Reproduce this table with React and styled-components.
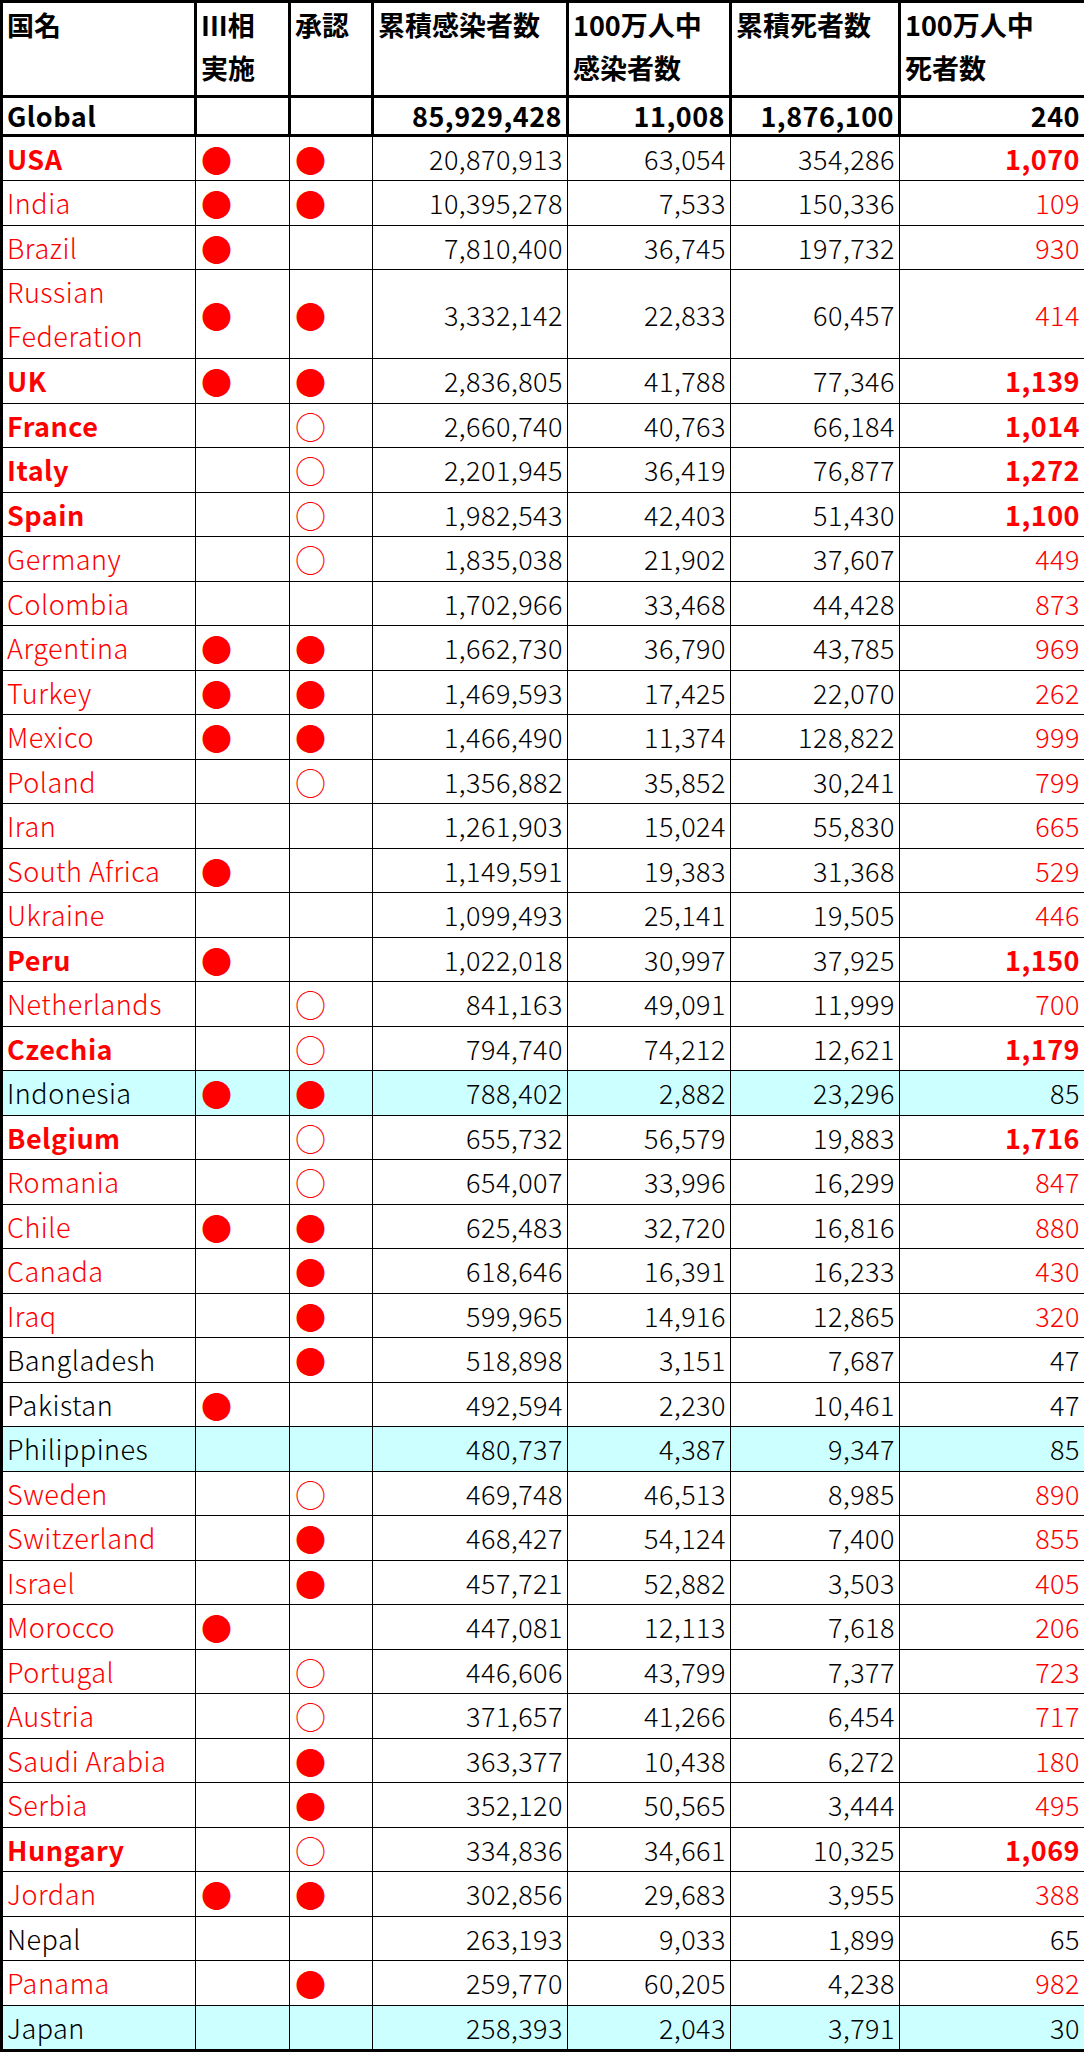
import React from 'react'
import styled, { createGlobalStyle } from 'styled-components'

const GlobalStyle = createGlobalStyle`
  html, body {
    margin: 0;
    padding: 0;
    background: #ffffff;
  }
  body {
    font-family: "Noto Sans CJK JP", "Noto Sans", sans-serif;
    color: #000000;
  }
`

const RED = '#ff0000'
const CYAN = '#ccffff'

const Sheet = styled.table`
  border-collapse: collapse;
  table-layout: fixed;
  width: 1084px;
  border: 3px solid #000;
  font-size: 27px;
  letter-spacing: 0.5px;
`

const HeadCell = styled.th`
  border: 3px solid #000;
  padding: 0 4px;
  height: 92px;
  line-height: 43px;
  text-align: left;
  vertical-align: top;
  font-weight: 700;
  letter-spacing: 0;
  white-space: pre-line;
`

const Cell = styled.td`
  border: ${(p) => (p.$strong ? '3px' : '1px')} solid #000;
  padding: 0 4px;
  height: ${(p) => (p.$strong ? '35.5px' : p.$tall ? '88px' : '43.5px')};
  line-height: ${(p) => (p.$strong ? '35px' : '43px')};
  text-align: ${(p) => (p.$num ? 'right' : 'left')};
  vertical-align: middle;
  color: ${(p) => p.$color || '#000'};
  font-weight: ${(p) => (p.$bold ? 700 : 300)};
  background: ${(p) => (p.$hl ? CYAN : 'transparent')};
  white-space: nowrap;
  overflow: hidden;
`

const NameText = styled.span`
  display: block;
  white-space: normal;
  line-height: 44px;
`

const Mark = styled.span`
  display: inline-block;
  vertical-align: top;
  color: ${RED};
  font-size: 31px;
  line-height: 43px;
  height: 43px;
  padding-left: 1px;
`

const headers = [
  { label: '国名', w: 194 },
  { label: 'III相\n実施', w: 94 },
  { label: '承認', w: 83 },
  { label: '累積感染者数', w: 195 },
  { label: '100万人中\n感染者数', w: 163 },
  { label: '累積死者数', w: 169 },
  { label: '100万人中\n死者数', w: 186 },
]

// name, phase3, approved (F = filled, O = hollow), cases, cases/M, deaths, deaths/M, highlight
const rows = [
  ['USA', 'F', 'F', '20,870,913', '63,054', '354,286', '1,070'],
  ['India', 'F', 'F', '10,395,278', '7,533', '150,336', '109'],
  ['Brazil', 'F', '', '7,810,400', '36,745', '197,732', '930'],
  ['Russian Federation', 'F', 'F', '3,332,142', '22,833', '60,457', '414'],
  ['UK', 'F', 'F', '2,836,805', '41,788', '77,346', '1,139'],
  ['France', '', 'O', '2,660,740', '40,763', '66,184', '1,014'],
  ['Italy', '', 'O', '2,201,945', '36,419', '76,877', '1,272'],
  ['Spain', '', 'O', '1,982,543', '42,403', '51,430', '1,100'],
  ['Germany', '', 'O', '1,835,038', '21,902', '37,607', '449'],
  ['Colombia', '', '', '1,702,966', '33,468', '44,428', '873'],
  ['Argentina', 'F', 'F', '1,662,730', '36,790', '43,785', '969'],
  ['Turkey', 'F', 'F', '1,469,593', '17,425', '22,070', '262'],
  ['Mexico', 'F', 'F', '1,466,490', '11,374', '128,822', '999'],
  ['Poland', '', 'O', '1,356,882', '35,852', '30,241', '799'],
  ['Iran', '', '', '1,261,903', '15,024', '55,830', '665'],
  ['South Africa', 'F', '', '1,149,591', '19,383', '31,368', '529'],
  ['Ukraine', '', '', '1,099,493', '25,141', '19,505', '446'],
  ['Peru', 'F', '', '1,022,018', '30,997', '37,925', '1,150'],
  ['Netherlands', '', 'O', '841,163', '49,091', '11,999', '700'],
  ['Czechia', '', 'O', '794,740', '74,212', '12,621', '1,179'],
  ['Indonesia', 'F', 'F', '788,402', '2,882', '23,296', '85', true],
  ['Belgium', '', 'O', '655,732', '56,579', '19,883', '1,716'],
  ['Romania', '', 'O', '654,007', '33,996', '16,299', '847'],
  ['Chile', 'F', 'F', '625,483', '32,720', '16,816', '880'],
  ['Canada', '', 'F', '618,646', '16,391', '16,233', '430'],
  ['Iraq', '', 'F', '599,965', '14,916', '12,865', '320'],
  ['Bangladesh', '', 'F', '518,898', '3,151', '7,687', '47'],
  ['Pakistan', 'F', '', '492,594', '2,230', '10,461', '47'],
  ['Philippines', '', '', '480,737', '4,387', '9,347', '85', true],
  ['Sweden', '', 'O', '469,748', '46,513', '8,985', '890'],
  ['Switzerland', '', 'F', '468,427', '54,124', '7,400', '855'],
  ['Israel', '', 'F', '457,721', '52,882', '3,503', '405'],
  ['Morocco', 'F', '', '447,081', '12,113', '7,618', '206'],
  ['Portugal', '', 'O', '446,606', '43,799', '7,377', '723'],
  ['Austria', '', 'O', '371,657', '41,266', '6,454', '717'],
  ['Saudi Arabia', '', 'F', '363,377', '10,438', '6,272', '180'],
  ['Serbia', '', 'F', '352,120', '50,565', '3,444', '495'],
  ['Hungary', '', 'O', '334,836', '34,661', '10,325', '1,069'],
  ['Jordan', 'F', 'F', '302,856', '29,683', '3,955', '388'],
  ['Nepal', '', '', '263,193', '9,033', '1,899', '65'],
  ['Panama', '', 'F', '259,770', '60,205', '4,238', '982'],
  ['Japan', '', '', '258,393', '2,043', '3,791', '30', true],
]

function Marker({ kind }) {
  if (kind === 'F') return <Mark>●</Mark>
  if (kind === 'O') return <Mark>○</Mark>
  return null
}

function CountryRow({ row }) {
  const [name, phase, approved, cases, casesM, deaths, deathsM, hl] = row
  const rate = parseInt(deathsM.replace(/,/g, ''), 10)
  const tone = rate >= 100 ? RED : '#000'
  const heavy = rate >= 1000
  const tall = name.length > 14
  return (
    <tr>
      <Cell $color={tone} $bold={heavy} $hl={hl} $tall={tall}>
        {tall ? <NameText>{name}</NameText> : name}
      </Cell>
      <Cell $hl={hl} $tall={tall}>
        <Marker kind={phase} />
      </Cell>
      <Cell $hl={hl} $tall={tall}>
        <Marker kind={approved} />
      </Cell>
      <Cell $num $hl={hl} $tall={tall}>{cases}</Cell>
      <Cell $num $hl={hl} $tall={tall}>{casesM}</Cell>
      <Cell $num $hl={hl} $tall={tall}>{deaths}</Cell>
      <Cell $num $hl={hl} $tall={tall} $color={tone} $bold={heavy}>
        {deathsM}
      </Cell>
    </tr>
  )
}

export default function App() {
  return (
    <>
      <GlobalStyle />
      <Sheet>
        <colgroup>
          {headers.map((h) => (
            <col key={h.label} style={{ width: h.w }} />
          ))}
        </colgroup>
        <thead>
          <tr>
            {headers.map((h) => (
              <HeadCell key={h.label}>{h.label}</HeadCell>
            ))}
          </tr>
        </thead>
        <tbody>
          <tr>
            <Cell $strong $bold>Global</Cell>
            <Cell $strong />
            <Cell $strong />
            <Cell $strong $num $bold>85,929,428</Cell>
            <Cell $strong $num $bold>11,008</Cell>
            <Cell $strong $num $bold>1,876,100</Cell>
            <Cell $strong $num $bold>240</Cell>
          </tr>
          {rows.map((r) => (
            <CountryRow key={r[0]} row={r} />
          ))}
        </tbody>
      </Sheet>
    </>
  )
}
